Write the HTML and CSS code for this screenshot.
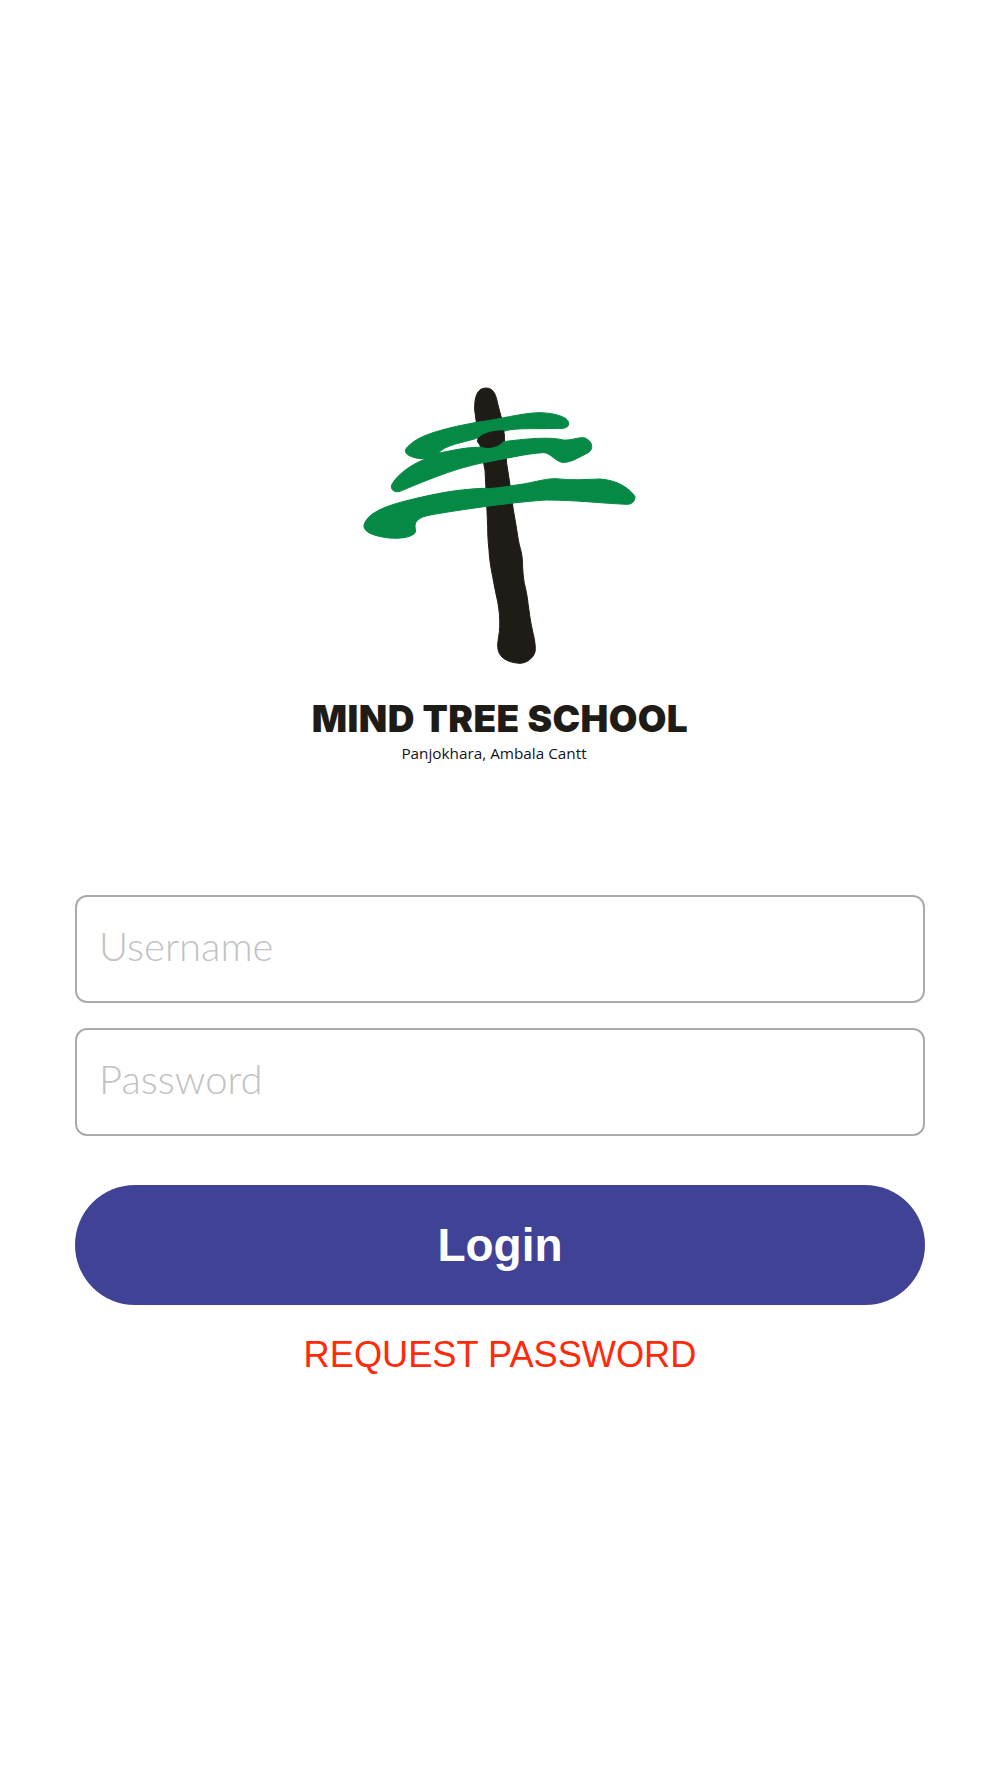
FILE: index.html
```html
<!DOCTYPE HTML>
<html>
    <head>
        <meta charset="UTF-8">
        <title>Mind Tree School</title>
        <link rel="stylesheet" href="styles.css">
    </head>
    <body>
        <div class="conteudo">
            <header class="marca">
                <svg class="logo" viewBox="0 0 960 960" width="320" height="320">
                    <path class="tronco" d="M404 120 C403 85 410 54 437 54 C462 54 468 75 474 105 L486 150 L494 215 C496 240 498 260 500 280 L510 345 C514 370 516 395 520 420 C526 450 530 480 535 510 C538 530 546 545 547 570 C548 595 549 620 553 640 C558 660 562 680 564 700 C568 725 570 750 575 770 C580 795 586 815 586 835 C588 860 560 880 540 880 C510 878 472 868 473 825 C474 805 479 790 479 770 C480 745 478 720 473 695 C468 670 462 645 458 620 C452 590 448 565 447 540 C444 515 443 490 443 470 L440 400 L435 300 L415 200 Z"/>
                    <path class="galho" d="M685 155 C680 140 640 128 595 128 C540 130 480 148 410 157 C330 172 250 190 215 220 C190 238 190 250 215 260 C230 266 245 266 258 266 C210 285 170 315 155 345 C150 360 165 368 180 364 C250 335 330 300 420 280 C490 268 560 250 610 248 C630 248 640 268 665 277 C690 280 720 260 745 248 C760 238 760 215 735 204 C715 200 695 212 670 210 C630 200 570 205 490 215 C470 218 440 232 415 232 C380 232 340 240 295 250 C315 225 360 220 410 205 L490 185 C510 175 560 176 600 176 L670 175 C685 172 688 165 685 155 Z"/>
                    <path class="galho" d="M72 465 C80 435 120 412 200 392 C280 372 350 358 430 355 C460 358 490 350 550 342 C590 335 620 325 650 326 C690 332 740 328 780 327 C830 330 870 355 885 380 C885 395 875 403 860 403 C790 400 700 390 620 390 C540 395 420 410 300 430 C260 437 230 440 225 465 C225 475 230 485 222 492 C200 508 150 508 110 497 C85 490 70 480 72 465 Z"/>
                    <path class="tronco" d="M412 212 C415 195 450 183 490 182 C497 200 492 215 480 222 C460 235 420 240 412 212 Z"/>
                </svg>
                <h1>MIND TREE SCHOOL</h1>
                <p>Panjokhara, Ambala Cantt</p>
            </header>
            <form class="form" name="form">
                <input class="campo" type="text" name="usuario" placeholder="Username">
                <input class="campo" type="password" name="senha" placeholder="Password">
                <button class="entrar" type="submit">Login</button>
                <a class="pedir" href="#">REQUEST PASSWORD</a>
            </form>
        </div>
    </body>
</html>
```
FILE: styles.css
```css
body{
    margin: 0;
    background: #fff;
    font-family: "Liberation Sans", Arial, sans-serif;
}
.conteudo{
    min-height: 1778px;
    padding-top: 370px;
    box-sizing: border-box;
}
.marca{
    text-align: center;
}
.logo{
    display: block;
    margin: 0 auto;
}
.tronco{
    fill: #1f1c18;
    stroke: #1f1c18;
    stroke-width: 3;
    stroke-linejoin: round;
}
.galho{
    fill: #058a45;
    stroke: #058a45;
    stroke-width: 3;
    stroke-linejoin: round;
}
.marca h1{
    margin: 9px 0 0;
    font-family: Inter, sans-serif;
    font-size: 37px;
    font-weight: 900;
    letter-spacing: 0.4px;
    line-height: 40px;
    color: #1f1c18;
}
.marca p{
    margin: 4px 12px 0 0;
    font-family: "Open Sans", sans-serif;
    font-size: 15.3px;
    line-height: 20px;
    color: #10131f;
}
.form{
    display: flex;
    flex-direction: column;
    margin: 132px 75px 0;
}
.campo{
    height: 108px;
    margin-bottom: 25px;
    padding: 0 22px 6px;
    box-sizing: border-box;
    border: 2px solid #aaa;
    border-radius: 12px;
    font-family: Lato, sans-serif;
    font-size: 40px;
    font-weight: 300;
    outline: none;
}
.campo::placeholder{
    color: #c2c2c2;
    opacity: 1;
}
.entrar{
    height: 120px;
    margin-top: 24px;
    border: 0;
    border-radius: 60px;
    background: #3f4295;
    color: #fff;
    font-family: "Liberation Sans", Arial, sans-serif;
    font-size: 46px;
    font-weight: bold;
}
.pedir{
    margin-top: 29px;
    text-align: center;
    font-size: 36.2px;
    line-height: 41px;
    color: #ff2a0a;
    text-decoration: none;
}
```
